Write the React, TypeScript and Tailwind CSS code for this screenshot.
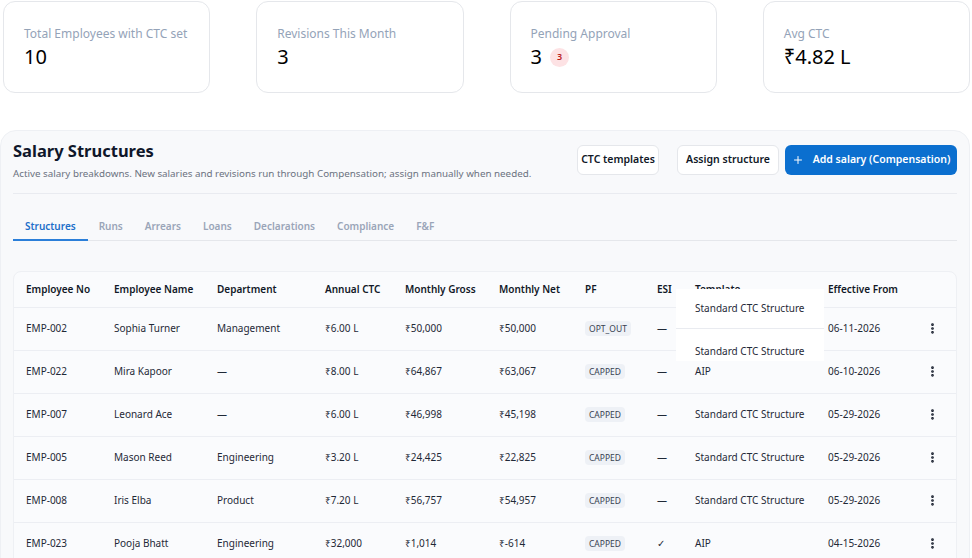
import { Plus, EllipsisVertical } from "lucide-react";

const stats = [
  { label: "Total Employees with CTC set", value: "10" },
  { label: "Revisions This Month", value: "3" },
  { label: "Pending Approval", value: "3", badge: "3" },
  { label: "Avg CTC", value: "₹4.82 L" },
];

const tabs = ["Structures", "Runs", "Arrears", "Loans", "Declarations", "Compliance", "F&F"];

const rows = [
  { no: "EMP-002", name: "Sophia Turner", dept: "Management", ctc: "₹6.00 L", gross: "₹50,000", net: "₹50,000", pf: "OPT_OUT", esi: "—", tpl: "", from: "06-11-2026" },
  { no: "EMP-022", name: "Mira Kapoor", dept: "—", ctc: "₹8.00 L", gross: "₹64,867", net: "₹63,067", pf: "CAPPED", esi: "—", tpl: "AIP", from: "06-10-2026" },
  { no: "EMP-007", name: "Leonard Ace", dept: "—", ctc: "₹6.00 L", gross: "₹46,998", net: "₹45,198", pf: "CAPPED", esi: "—", tpl: "Standard CTC Structure", from: "05-29-2026" },
  { no: "EMP-005", name: "Mason Reed", dept: "Engineering", ctc: "₹3.20 L", gross: "₹24,425", net: "₹22,825", pf: "CAPPED", esi: "—", tpl: "Standard CTC Structure", from: "05-29-2026" },
  { no: "EMP-008", name: "Iris Elba", dept: "Product", ctc: "₹7.20 L", gross: "₹56,757", net: "₹54,957", pf: "CAPPED", esi: "—", tpl: "Standard CTC Structure", from: "05-29-2026" },
  { no: "EMP-023", name: "Pooja Bhatt", dept: "Engineering", ctc: "₹32,000", gross: "₹1,014", net: "₹-614", pf: "CAPPED", esi: "✓", tpl: "AIP", from: "04-15-2026" },
];

const cols = [
  { label: "Employee No", w: "w-[100px]" },
  { label: "Employee Name", w: "w-[103px]" },
  { label: "Department", w: "w-[108px]" },
  { label: "Annual CTC", w: "w-[80px]" },
  { label: "Monthly Gross", w: "w-[94px]" },
  { label: "Monthly Net", w: "w-[86px]" },
  { label: "PF", w: "w-[72px]" },
  { label: "ESI", w: "w-[38px]" },
  { label: "Template", w: "w-[133px]" },
  { label: "Effective From", w: "w-[105px]" },
  { label: "", w: "" },
];

export default function App() {
  return (
    <div className="min-h-screen bg-white font-['Noto_Sans',sans-serif] text-[#111827]">
      <div className="grid grid-cols-4 gap-[46px] pt-px pl-[3px] pr-[2px]">
        {stats.map((s) => (
          <div key={s.label} className="h-[92px] rounded-xl border border-[#e5e7eb] bg-white pl-[20px] pt-[24px]">
            <div className="text-[12px] leading-4 text-[#94a3b8]">{s.label}</div>
            <div className="mt-[3px] flex items-center gap-2 text-[20px] leading-6 text-black">
              <span>{s.value}</span>
              {s.badge && (
                <span className="flex h-[19px] w-[19px] items-center justify-center rounded-full bg-[#fde2e4] text-[9px] font-semibold text-[#b91c1c]">
                  {s.badge}
                </span>
              )}
            </div>
          </div>
        ))}
      </div>

      <div className="mt-[37px] mr-[2px] rounded-t-2xl border border-[#eef0f4] bg-[#f8f9fb] px-[12px] pt-[8px]">
        <div className="flex items-start justify-between border-b border-[#e9ebf0] pb-[12px]">
          <div>
            <h1 className="text-[16.5px] font-bold leading-6 text-[#0f172a]">Salary Structures</h1>
            <p className="mt-[3px] whitespace-nowrap text-[9.8px] leading-[15px] text-[#6b7280]">
              Active salary breakdowns. New salaries and revisions run through Compensation; assign manually when needed.
            </p>
          </div>
          <div className="flex shrink-0 items-center pt-[6px]">
            <button className="mr-[18px] h-[30px] w-[82px] whitespace-nowrap rounded-md border border-[#e5e7eb] bg-white text-[10.5px] font-semibold text-[#111827]">
              CTC templates
            </button>
            <button className="mr-[6px] h-[30px] w-[102px] whitespace-nowrap rounded-md border border-[#e5e7eb] bg-white text-[10.5px] font-semibold text-[#111827]">
              Assign structure
            </button>
            <button className="flex h-[30px] w-[172px] items-center justify-center gap-[9px] whitespace-nowrap rounded-md bg-[#0b6fcf] text-[10.5px] font-semibold text-white">
              <Plus size={12} strokeWidth={2} />
              Add salary (Compensation)
            </button>
          </div>
        </div>

        <div className="mt-[25px] flex border-b border-[#e5e7eb]">
          {tabs.map((t, i) => (
            <div
              key={t}
              className={
                i === 0
                  ? "-mb-px border-b-2 border-[#2b7fd9] px-[12px] pb-[5px] text-[10px] font-semibold leading-[15px] text-[#1d6fc9]"
                  : "px-[11px] pb-[5px] text-[10px] font-semibold leading-[15px] text-[#9aa5b8]"
              }
            >
              {t}
            </div>
          ))}
        </div>

        <div className="relative mt-[30px] rounded-t-lg border border-[#eef0f4] bg-[#fafbfd]">
          <table className="w-full table-fixed border-collapse text-left text-[10px]">
            <thead>
              <tr className="h-[35px] border-b border-[#eceef3]">
                {cols.map((c, i) => (
                  <th key={i} className={`${c.w} ${i === 0 ? "pl-[12px]" : ""} font-semibold text-[#111827]`}>
                    {c.label}
                  </th>
                ))}
              </tr>
            </thead>
            <tbody>
              {rows.map((r) => (
                <tr key={r.no} className="h-[43px] border-b border-[#eceef3] text-[#1f2937]">
                  <td className="pl-[12px]">{r.no}</td>
                  <td>{r.name}</td>
                  <td>{r.dept}</td>
                  <td>{r.ctc}</td>
                  <td>{r.gross}</td>
                  <td>{r.net}</td>
                  <td>
                    <span className="rounded bg-[#eef1f6] px-[4px] py-[2px] text-[8.5px] text-[#374151]">{r.pf}</span>
                  </td>
                  <td>{r.esi}</td>
                  <td>{r.tpl}</td>
                  <td>{r.from}</td>
                  <td>
                    <EllipsisVertical size={13} strokeWidth={3} className="ml-[-7px] text-[#111827]" />
                  </td>
                </tr>
              ))}
            </tbody>
          </table>

          <div className="absolute left-[662px] top-[17px] w-[148px] text-[10px] text-[#1f2937]">
            <div className="h-[40px] border-b border-[#e9ebf0] bg-white pl-[19px] pt-[12px]">Standard CTC Structure</div>
            <div className="h-[32px] bg-white pl-[19px] pt-[15px]">Standard CTC Structure</div>
          </div>
        </div>
      </div>
    </div>
  );
}
